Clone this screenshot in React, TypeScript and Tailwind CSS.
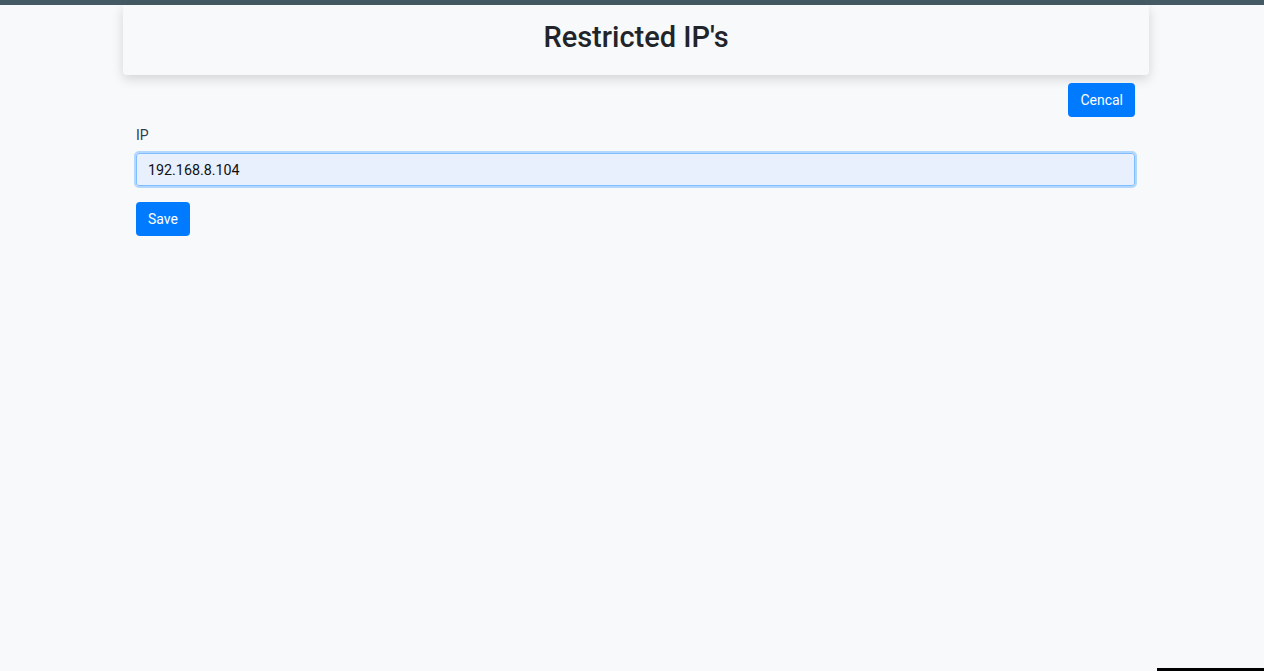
import React from "react";

export default function App() {
  return (
    <div className="relative min-h-[671px] w-full bg-[#f8f9fa] font-['Roboto',sans-serif] overflow-hidden">
      <div className="h-[5px] bg-[#455a64]" />
      <div className="ml-[123px] w-[1026px]">
        <div className="h-[70px] flex items-center justify-center bg-[#f8f9fa] rounded-b-[4px] shadow-[0_4px_12px_rgba(0,0,0,0.15)]">
          <h1 className="text-[29px] font-medium text-[#212529] leading-none -mt-[5px]">Restricted IP's</h1>
        </div>
        <div className="pl-[13px] pr-[14px]">
          <div className="flex justify-end mt-[8px]">
            <button className="h-[34px] px-[12px] rounded-[4px] bg-[#007bff] text-white text-[14px]">Cencal</button>
          </div>
          <div className="mt-[8px] text-[14px] text-[#2e3f52] leading-[20px]">IP</div>
          <div className="mt-[6px] -mx-[2px] h-[37px] rounded-[5px] border-2 border-[#b3d7ff]">
            <div className="h-full rounded-[3px] border border-[#80bdff] bg-[#e8f0fe] flex items-center pt-[2px] px-[11px] text-[14.3px] text-[#111]">
              192.168.8.104
            </div>
          </div>
          <button className="mt-[14px] h-[34px] px-[12px] rounded-[4px] bg-[#007bff] text-white text-[14px]">Save</button>
        </div>
      </div>
      <div className="absolute right-0 bottom-0 w-[107px] h-[3px] bg-black" />
    </div>
  );
}
